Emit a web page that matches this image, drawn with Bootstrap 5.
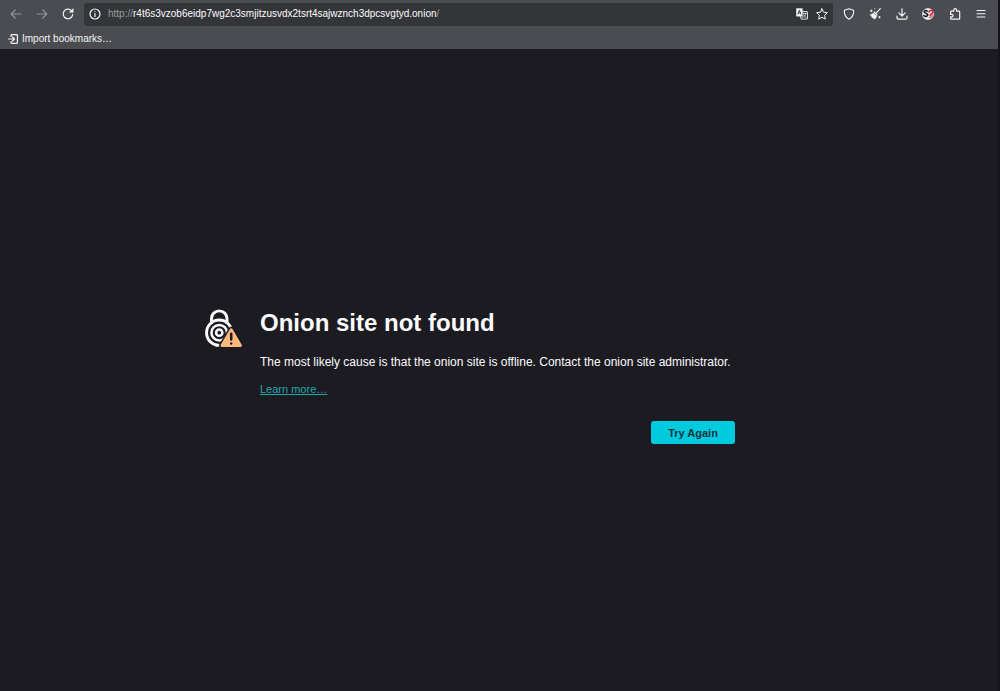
<!DOCTYPE html>
<html lang="en">
<head>
<meta charset="utf-8">
<meta name="viewport" content="width=device-width, initial-scale=1">
<title>Onion site not found</title>
<link href="https://cdn.jsdelivr.net/npm/bootstrap@5.3.0/dist/css/bootstrap.min.css" rel="stylesheet">
<style>
body { background: #1c1b22; color: #fbfbfe; font-family: "Liberation Sans", Arial, sans-serif; font-size: 11px; line-height: 16px; border-right: 2px solid #15141b; }
.browser-bar { background: #4a4c51; color: #f4f4f6; height: 49px; font-size: 10px; }
.tool-row { height: 28px; padding-left: 4px; padding-right: 5px; }
.nav-buttons { gap: 2px; }
.tool-btn { width: 24px; height: 24px; color: inherit; background: none; border: 0; padding: 0; display: flex; align-items: center; justify-content: center; }
.tool-btn:disabled { color: #929398; }
.tool-group { width: 156px; margin-left: 4px; }
.url-box { background: #333538; height: 23px; border-radius: 3px; margin-left: 4px; padding-left: 1px; padding-right: 1px; }
.url-box .tool-btn { width: 20px; }
.url-text { color: #9b9b9f; margin-left: 3px; }
.url-text b { color: #fbfbfe; font-weight: 400; }
.bookmark-btn { color: inherit; background: none; border: 0; padding: 0 8px; height: 21px; }
.error-body { max-width: 588px; padding-right: 58px; padding-top: 13px; }
.error-icon { width: 55px; }
.error-title { font-size: 24px; line-height: 28px; font-weight: 700; margin-bottom: 16px; }
.error-text { font-size: 12px; line-height: 18px; margin-bottom: 10px; }
.learn-link { color: #1fa9ad; }
.try-btn { --bs-btn-bg: #00cade; --bs-btn-color: #15333d; --bs-btn-hover-bg: #80ebff; --bs-btn-hover-color: #15333d; width: 84px; height: 23px; padding: 0; font-size: 11px; line-height: 16px; font-weight: 700; border: 0; border-radius: 3px; }
svg { display: block; fill: none; stroke: currentColor; stroke-width: 1.2; stroke-linecap: round; stroke-linejoin: round; }
</style>
</head>
<body class="d-flex flex-column min-vh-100">
<header class="browser-bar flex-shrink-0">
  <nav class="tool-row d-flex align-items-center" aria-label="Browser toolbar">
    <div class="nav-buttons d-flex">
      <button class="tool-btn" disabled aria-label="Back"><svg width="12" height="12" viewBox="0 0 12 12"><path d="M11 6H1.2M5.2 2 1.2 6l4 4"/></svg></button>
      <button class="tool-btn" disabled aria-label="Forward"><svg width="12" height="12" viewBox="0 0 12 12"><path d="M1 6h9.8M6.8 2l4 4-4 4"/></svg></button>
      <button class="tool-btn" aria-label="Reload"><svg width="12" height="12" viewBox="0 0 12 12"><path d="M10.7 6.7A4.8 4.8 0 1 1 9.4 2.6l1 1"/><path d="M11.2.8v3.5H7.6z" fill="currentColor" stroke-width=".5"/></svg></button>
    </div>
    <div class="url-box d-flex align-items-center flex-grow-1">
      <button class="tool-btn" aria-label="Site information"><svg width="12" height="12" viewBox="0 0 12 12"><circle cx="6" cy="6" r="5"/><path d="M6 5.6v2.8M6 3.5v.1"/></svg></button>
      <div class="url-text flex-grow-1 text-nowrap">http://<b>r4t6s3vzob6eidp7wg2c3smjitzusvdx2tsrt4sajwznch3dpcsvgtyd.onion</b>/</div>
      <button class="tool-btn" aria-label="Translate"><svg width="12" height="12" viewBox="0 0 12 12"><path d="M1 .5h5.4v7.8H1a.7.7 0 0 1-.7-.7V1.2A.7.7 0 0 1 1 .5z" fill="currentColor" stroke-width=".4"/><path d="m2 6 1.4-3.8L4.8 6M2.5 4.9h1.8" stroke="#333538" stroke-width=".9"/><path d="M6.5 3.6H11a.5.5 0 0 1 .5.5v6.5a.5.5 0 0 1-.5.5H5.3a.5.5 0 0 1-.5-.5V8.3" stroke-width=".9"/><path d="M7.2 5.4h3.2M9.7 5.5C9.5 7.3 8.4 8.7 6.6 9.5M7.7 6.8c.4 1.1 1.2 2 2.5 2.6" stroke-width=".8"/></svg></button>
      <button class="tool-btn" aria-label="Bookmark this page"><svg width="12" height="12" viewBox="0 0 12 12"><path d="m6 .8 1.6 3.4 3.7.5-2.7 2.6.7 3.8L6 9.3l-3.3 1.8.7-3.8L.7 4.7l3.7-.5z" stroke-width="1"/></svg></button>
    </div>
    <div class="d-flex justify-content-between tool-group">
      <button class="tool-btn" aria-label="Security level"><svg width="12" height="12" viewBox="0 0 12 12"><path d="M6 .8 10.6 2.3c.4 4.2-.8 7.1-4.6 9C2.2 9.4 1 6.5 1.4 2.3z" stroke-width="1.1"/></svg></button>
      <button class="tool-btn" aria-label="New identity"><svg width="12" height="12" viewBox="0 0 12 12"><path d="M11.3.6 7.4 4.8"/><path d="M5.5 3.8 8.3 6.6C7.9 8.6 7 10.2 5.5 11.4L4.3 9.3l-.2 1.2-1.6-1.7.1-1L.8 7c1.9-.5 3.4-1.5 4.7-3.2z" fill="currentColor" stroke-width=".4"/><path d="m4.7 5 2.4 2.4" stroke="#4a4c51" stroke-width=".7"/><path d="M2.3 2v1.8M1.4 2.9h1.8M5.8.7v.1M10.5 8.5v1.4M9.8 9.2h1.4" stroke-width="1"/></svg></button>
      <button class="tool-btn" aria-label="Downloads"><svg width="12" height="12" viewBox="0 0 12 12"><path d="M6 .8v7M2.8 4.9 6 8l3.2-3.1M1 8v1.9c0 .7.5 1.2 1.2 1.2h7.6c.7 0 1.2-.5 1.2-1.2V8"/></svg></button>
      <button class="tool-btn" aria-label="NoScript"><svg width="14" height="14" viewBox="0 0 14 14"><circle cx="7" cy="7" r="5.6" fill="#eee" stroke="#eee" stroke-width=".6"/><path d="M7.3 8.1 11 11.2A5.7 5.7 0 0 0 12.6 6z" fill="#e08a96" stroke="none"/><path d="M6.2 4.1C4.9 3.1 3 3.6 3.2 5c.2 1.5 3.5.9 3.5 2.8 0 1.8-2.4 2-4 .9" stroke="#18181b" stroke-width="1.6"/><path d="M8 5.1c.1-2.2 4-2.2 3.8 0C11.7 6.5 9.6 6.6 9.3 8.2M8.9 10.4v.1" stroke="#cf2941" stroke-width="1.5"/></svg></button>
      <button class="tool-btn" aria-label="Extensions"><svg width="12" height="12" viewBox="0 0 12 12"><path d="M4.8 3.2V2.1a1.4 1.4 0 0 1 2.8 0v1.1h2.3c.5 0 .8.3.8.8v6.4c0 .5-.3.8-.8.8H2.4c-.5 0-.8-.3-.8-.8V8.9h1.2a1.3 1.3 0 0 0 0-2.6H1.6V4c0-.5.3-.8.8-.8z"/></svg></button>
      <button class="tool-btn" aria-label="Open menu"><svg width="12" height="12" viewBox="0 0 12 12"><path d="M2 2.5h8M2 5.7h8M2 9h8" stroke-width="1.1"/></svg></button>
    </div>
  </nav>
  <button class="bookmark-btn d-flex align-items-center gap-1"><svg width="10" height="10" viewBox="0 0 10 10"><path d="M3 2.5V1.4c0-.5.3-.8.8-.8h4.8c.5 0 .8.3.8.8v7.2c0 .5-.3.8-.8.8H3.8c-.5 0-.8-.3-.8-.8V7.5M.6 5h5.6M4.5 3l2 2-2 2"/></svg>Import bookmarks…</button>
</header>
<main class="flex-grow-1 d-flex align-items-center justify-content-center">
  <section class="error-body d-flex w-100">
    <div class="error-icon flex-shrink-0">
      <svg width="38" height="39" viewBox="0 0 39 39" aria-hidden="true"><g stroke="#fbfbfe" stroke-width="3" stroke-linecap="butt"><path d="M6.6 15V9.4a8 8 0 0 1 16 0V15"/><circle cx="14.6" cy="23.8" r="13"/><circle cx="14.6" cy="23.8" r="8" stroke-width="2.6"/><circle cx="14.6" cy="23.8" r="3.2" stroke-width="2.6"/></g><path d="M26.9 20.7 17.4 37h19z" fill="#ffb87b" stroke="#1c1b22" stroke-width="6"/><path d="M26.9 20.7 17.4 37h19z" fill="#ffb87b" stroke="#ffb87b" stroke-width="3"/><path d="M26.9 24.8v6M26.9 34.8v.1" stroke="#1c1b22" stroke-width="2.6"/></svg>
    </div>
    <div class="flex-grow-1">
      <h1 class="error-title">Onion site not found</h1>
      <p class="error-text text-nowrap">The most likely cause is that the onion site is offline. Contact the onion site administrator.</p>
      <a class="learn-link" href="#">Learn more…</a>
      <div class="d-flex justify-content-end mt-4"><button class="btn try-btn">Try Again</button></div>
    </div>
  </section>
</main>
<script src="https://cdn.jsdelivr.net/npm/bootstrap@5.3.0/dist/js/bootstrap.bundle.min.js"></script>
</body>
</html>
